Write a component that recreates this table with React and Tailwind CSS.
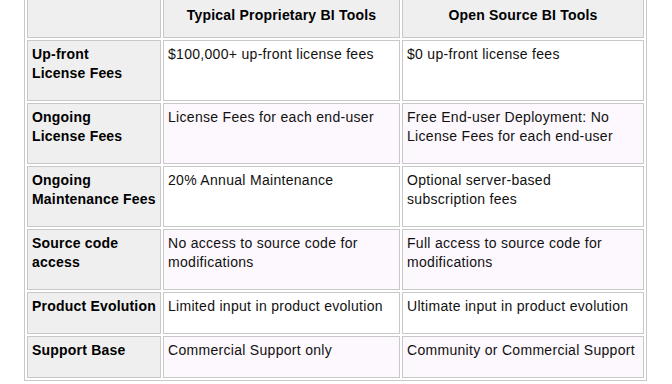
import React from "react";

const rows = [
  {
    label: ["Up-front", "License Fees"],
    a: ["$100,000+ up-front license fees"],
    b: ["$0 up-front license fees"],
    pink: false,
  },
  {
    label: ["Ongoing", "License Fees"],
    a: ["License Fees for each end-user"],
    b: ["Free End-user Deployment: No", "License Fees for each end-user"],
    pink: true,
  },
  {
    label: ["Ongoing", "Maintenance Fees"],
    a: ["20% Annual Maintenance"],
    b: ["Optional server-based", "subscription fees"],
    pink: false,
  },
  {
    label: ["Source code", "access"],
    a: ["No access to source code for", "modifications"],
    b: ["Full access to source code for", "modifications"],
    pink: true,
  },
  {
    label: ["Product Evolution"],
    a: ["Limited input in product evolution"],
    b: ["Ultimate input in product evolution"],
    pink: false,
  },
  {
    label: ["Support Base"],
    a: ["Commercial Support only"],
    b: ["Community or Commercial Support"],
    pink: true,
  },
];

function Lines({ lines }) {
  return lines.map((l, i) => (
    <React.Fragment key={i}>
      {i > 0 && <br />}
      {l}
    </React.Fragment>
  ));
}

export default function App() {
  return (
    <div
      className="w-[672px] h-[384px] overflow-hidden bg-white text-[#111] text-[14px] leading-[19px]"
      style={{ fontFamily: '"Liberation Sans", Arial, sans-serif' }}
    >
      <div className="ml-[24px] -mt-[4px] w-[623px] border border-[#c8c8c8] p-[2px] grid grid-cols-[134px_237px_242px] gap-[2px]">
        {/* header */}
        <div className="border border-[#c8c8c8] bg-[#efefef] pt-[6px] pb-[12px]" />
        <div className="border border-[#c8c8c8] bg-[#efefef] pt-[6px] pb-[12px] text-center font-bold tracking-[0.2px] text-black">
          Typical Proprietary BI Tools
        </div>
        <div className="border border-[#c8c8c8] bg-[#efefef] pt-[6px] pb-[12px] text-center font-bold tracking-[0.2px] text-black">
          Open Source BI Tools
        </div>

        {rows.map((r, i) => (
          <React.Fragment key={i}>
            <div className="border border-[#c8c8c8] bg-[#efefef] pl-[4px] pr-[1px] pt-[4px] pb-[17px] font-bold tracking-[0.2px] text-black whitespace-nowrap">
              <Lines lines={r.label} />
            </div>
            <div
              className={`border border-[#c8c8c8] pl-[4px] pr-[2px] pt-[4px] pb-[17px] tracking-[0.3px] whitespace-nowrap ${
                r.pink ? "bg-[#fdf8fd]" : "bg-white"
              }`}
            >
              <Lines lines={r.a} />
            </div>
            <div
              className={`border border-[#c8c8c8] pl-[4px] pr-[2px] pt-[4px] pb-[17px] tracking-[0.3px] whitespace-nowrap ${
                r.pink ? "bg-[#fdf8fd]" : "bg-white"
              }`}
            >
              <Lines lines={r.b} />
            </div>
          </React.Fragment>
        ))}
      </div>
    </div>
  );
}
